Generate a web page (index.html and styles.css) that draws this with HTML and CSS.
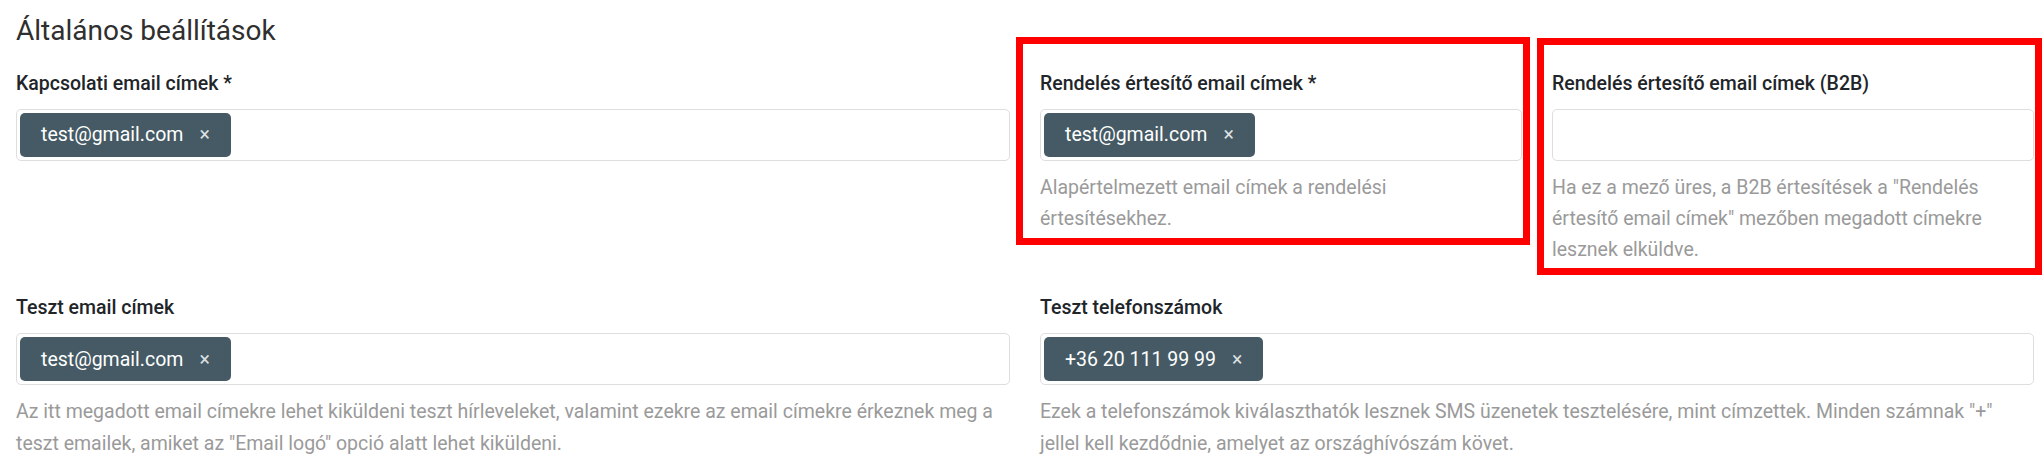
FILE: index.html
```html
<!DOCTYPE html>
<html lang="hu">
<head>
<meta charset="utf-8">
<title>Általános beállítások</title>
<link rel="stylesheet" href="styles.css">
</head>
<body>
<div class="page">
  <h2 class="title">Általános beállítások</h2>
  <div class="grid">
    <div class="field span2">
      <label class="label">Kapcsolati email címek *</label>
      <div class="input"><span class="chip">test@gmail.com<span class="x">×</span></span></div>
    </div>
    <div class="field hl hl-a">
      <label class="label">Rendelés értesítő email címek *</label>
      <div class="input"><span class="chip">test@gmail.com<span class="x">×</span></span></div>
      <p class="help">Alapértelmezett email címek a rendelési értesítésekhez.</p>
    </div>
    <div class="field hl hl-b">
      <label class="label">Rendelés értesítő email címek (B2B)</label>
      <div class="input"></div>
      <p class="help">Ha ez a mező üres, a B2B értesítések a "Rendelés értesítő email címek" mezőben megadott címekre lesznek elküldve.</p>
    </div>
    <div class="field span2">
      <label class="label">Teszt email címek</label>
      <div class="input"><span class="chip">test@gmail.com<span class="x">×</span></span></div>
      <p class="help">Az itt megadott email címekre lehet kiküldeni teszt hírleveleket, valamint ezekre az email címekre érkeznek meg a teszt emailek, amiket az "Email logó" opció alatt lehet kiküldeni.</p>
    </div>
    <div class="field span2">
      <label class="label">Teszt telefonszámok</label>
      <div class="input"><span class="chip">+36 20 111 99 99<span class="x">×</span></span></div>
      <p class="help">Ezek a telefonszámok kiválaszthatók lesznek SMS üzenetek tesztelésére, mint címzettek. Minden számnak "+" jellel kell kezdődnie, amelyet az országhívószám követ.</p>
    </div>
  </div>
</div>
</body>
</html>
```
FILE: styles.css
```css
html, body {
  margin: 0;
  padding: 0;
  background: #ffffff;
}

body {
  font-family: Roboto, "Liberation Sans", Arial, sans-serif;
  color: #212529;
}

.page {
  padding: 13.6px 10px 0 16px;
}

.title {
  margin: 0 0 20.5px 0;
  font-size: 28px;
  line-height: 33.6px;
  font-weight: 400;
  color: #2f2f2f;
}

.grid {
  display: grid;
  grid-template-columns: repeat(4, 1fr);
  column-gap: 30px;
  row-gap: 26.7px;
  align-items: start;
}

.field {
  position: relative;
  min-width: 0;
}

.span2 {
  grid-column: span 2;
}

.label {
  display: block;
  margin: 0 0 10px 0;
  font-size: 19.5px;
  line-height: 31.2px;
  font-weight: 500;
  color: #212529;
}

.input {
  box-sizing: border-box;
  height: 52px;
  padding: 3px;
  border: 1px solid #dedede;
  border-radius: 5px;
  display: flex;
  align-items: center;
  background: #ffffff;
}

.chip {
  box-sizing: border-box;
  height: 44px;
  display: inline-flex;
  align-items: center;
  padding: 0 21px;
  background: #455a64;
  color: #ffffff;
  border-radius: 5px;
  font-size: 19.5px;
  line-height: 1;
}

.x {
  margin-left: 16px;
  font-size: 19.5px;
  color: rgba(255, 255, 255, 0.82);
}

.help {
  margin: 11px 0 0 0;
  font-size: 19.5px;
  line-height: 31.2px;
  color: #9a9a9a;
}

.hl::after {
  content: "";
  position: absolute;
  border: 7px solid #ff0000;
  pointer-events: none;
}

.hl-a::after {
  top: -30.5px;
  left: -24px;
  right: -8px;
  bottom: -11px;
}

.hl-b::after {
  top: -30px;
  left: -15px;
  right: -8px;
  bottom: -9px;
}
```
